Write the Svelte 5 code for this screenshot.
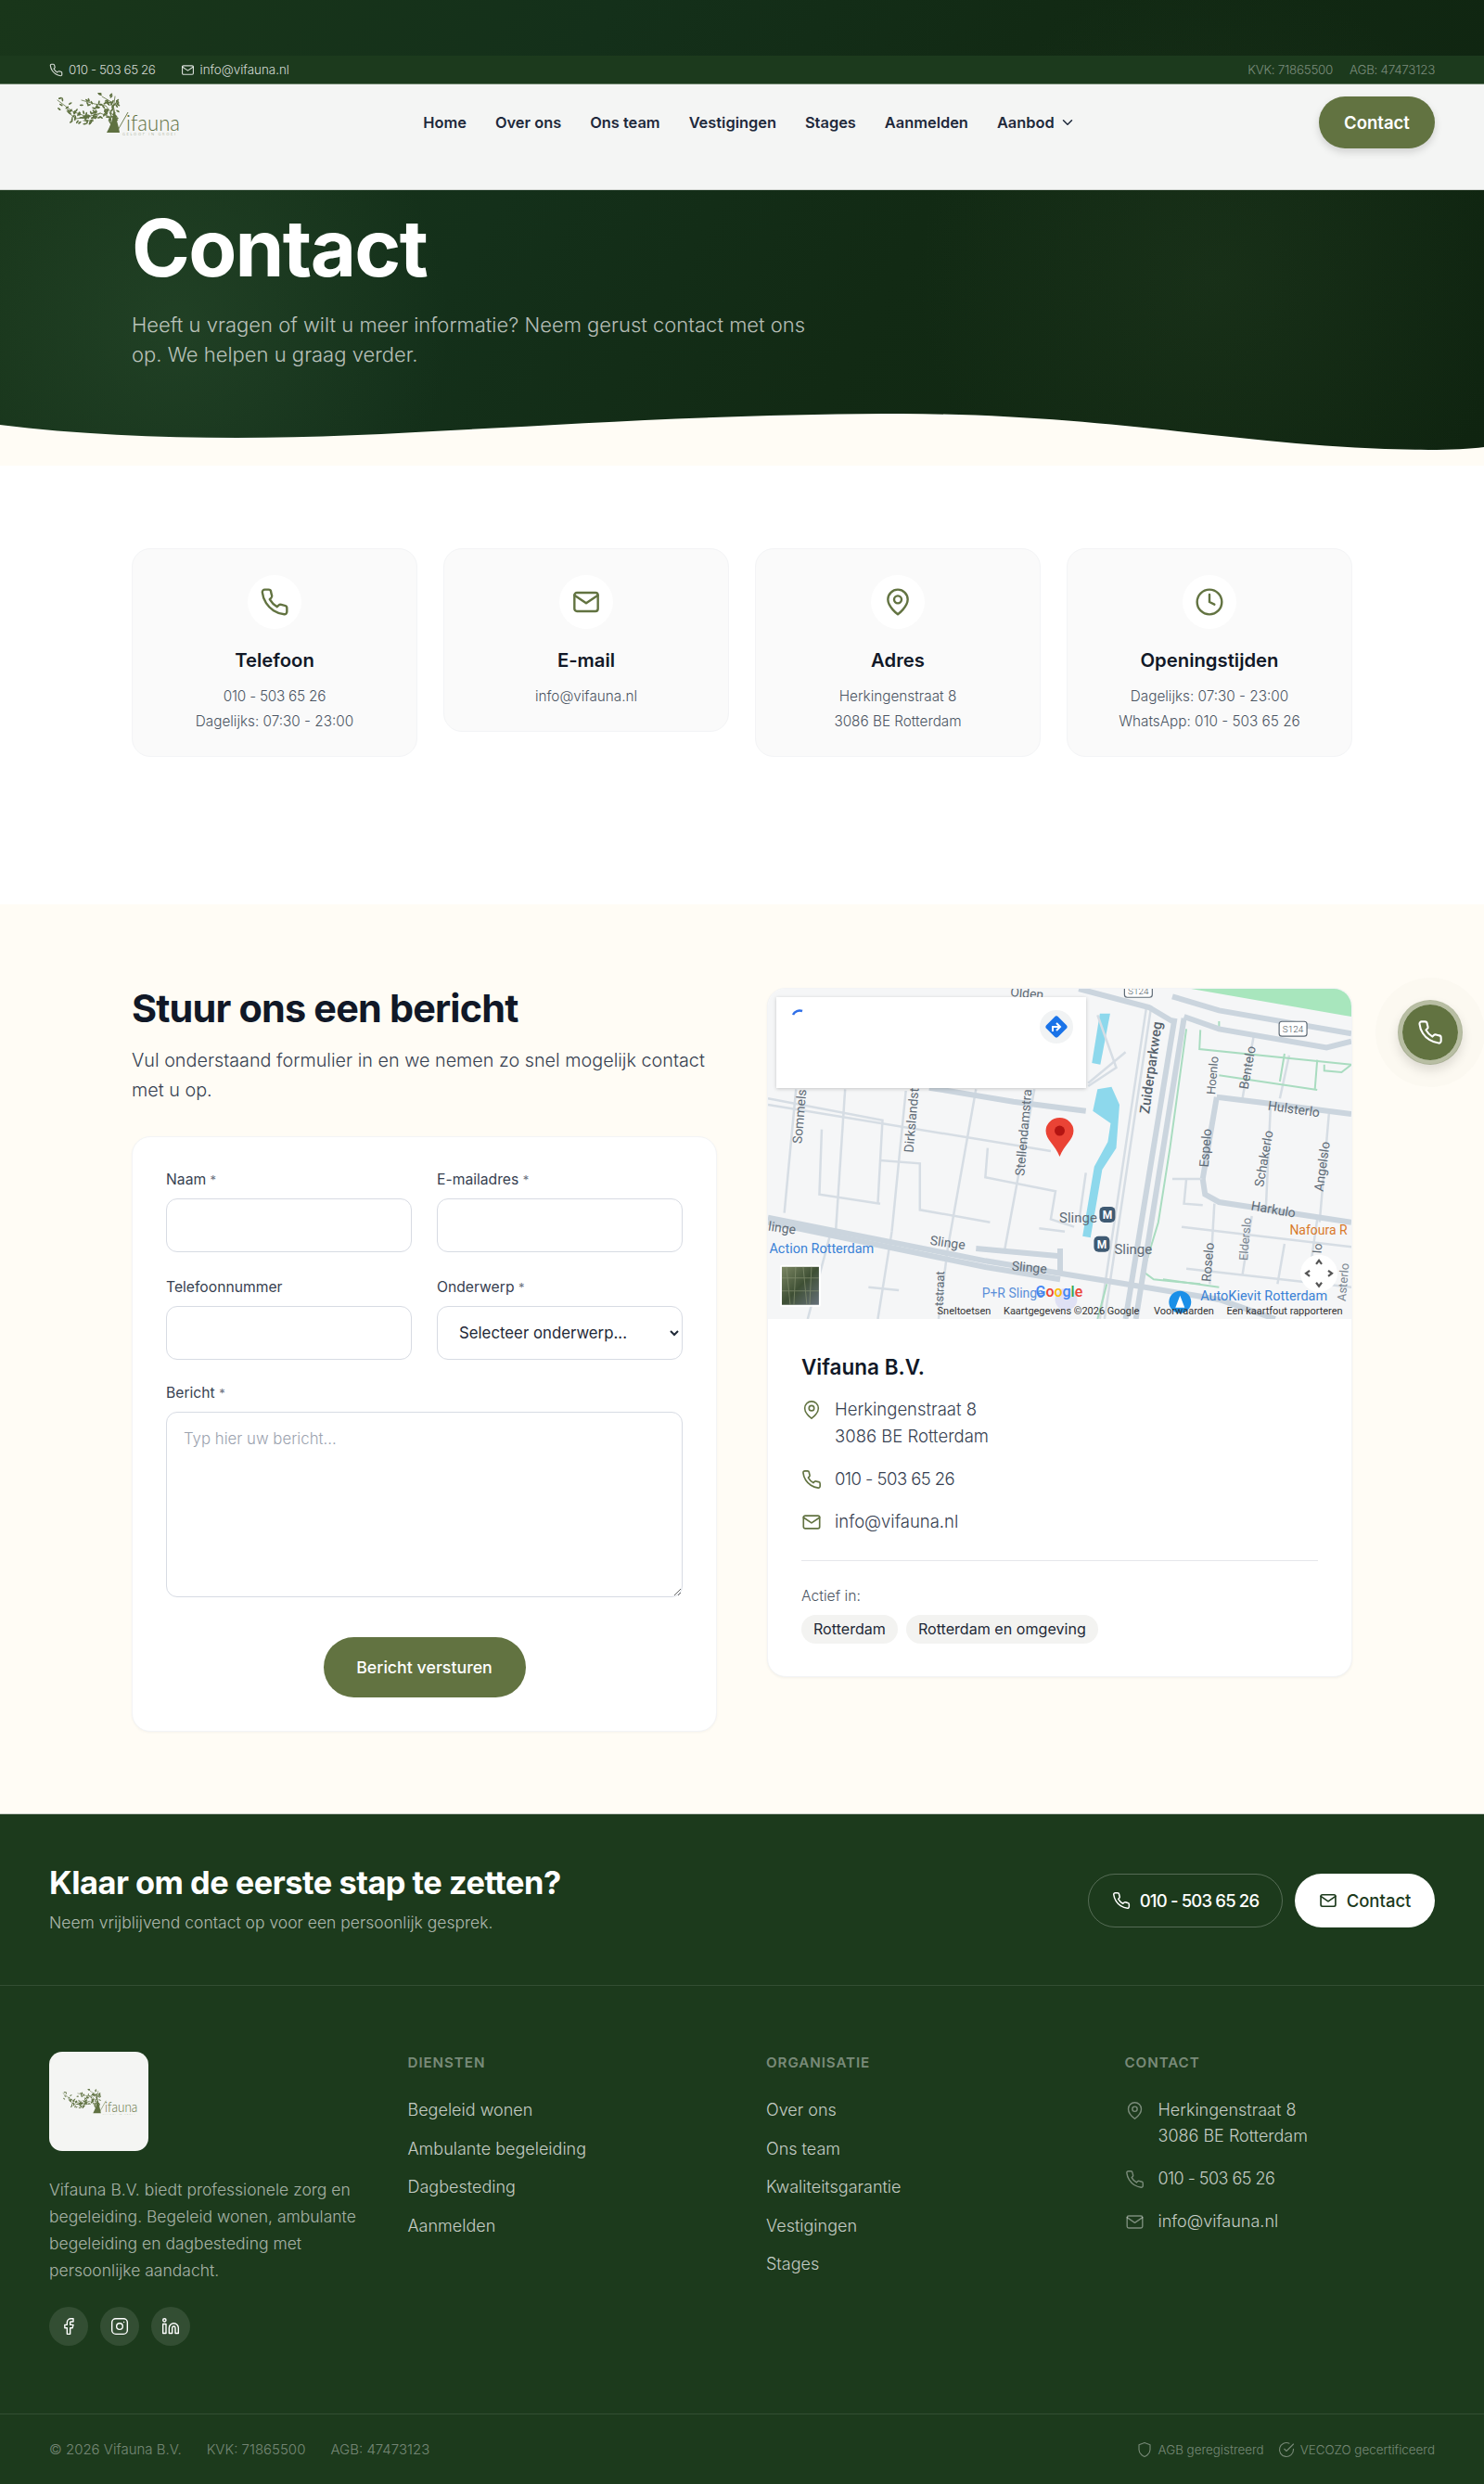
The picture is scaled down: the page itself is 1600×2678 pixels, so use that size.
<script>
  const nav = ['Home', 'Over ons', 'Ons team', 'Vestigingen', 'Stages', 'Aanmelden'];
  const diensten = ['Begeleid wonen', 'Ambulante begeleiding', 'Dagbesteding', 'Aanmelden'];
  const organisatie = ['Over ons', 'Ons team', 'Kwaliteitsgarantie', 'Vestigingen', 'Stages'];

  // Deterministic leaf cloud for the tree logo
  const branches = [
    [[66, 28], [50, 22], [36, 26], [20, 20], [4, 8]],
    [[64, 24], [56, 14], [44, 12], [30, 8]],
    [[66, 26], [62, 10], [52, 4]],
    [[50, 22], [40, 30], [32, 30]],
    [[36, 26], [24, 28], [14, 20]],
    [[64, 18], [66, 4]]
  ];
  let seed = 7;
  const rnd = () => ((seed = (seed * 16807) % 2147483647) / 2147483647);
  const leaves = [];
  for (const b of branches) {
    for (let i = 1; i < b.length; i++) {
      for (let k = 0; k < 8; k++) {
        const t = k / 8;
        leaves.push({
          x: b[i - 1][0] + (b[i][0] - b[i - 1][0]) * t + (rnd() - 0.5) * 10,
          y: b[i - 1][1] + (b[i][1] - b[i - 1][1]) * t + (rnd() - 0.5) * 10,
          r: Math.floor(rnd() * 180)
        });
      }
    }
  }

  // Map: geometry is given in a 1248x1068 grid and stretched onto the map
  const wide = [
    'M905 140 L800 1113', 'M925 140 L822 1113',
    'M700 45 L850 105 L900 150', 'M900 70 L1000 115 L1283 190', 'M925 135 L1000 175 L1230 235 L1283 215',
    'M35 785 L500 925 L660 965 L800 1000 L1000 1050 L1120 1113', 'M35 800 L500 945 L660 985',
    'M380 365 L560 410 L715 440',
    'M995 395 L1100 415 L1283 450', 'M965 660 L970 710 L1000 735 L1283 800', 'M995 395 L965 660',
    'M660 885 L660 960', 'M480 885 L660 910'
  ];
  const thin = [
    'M95 370 L70 770', 'M35 400 L280 470 L270 740', 'M35 420 L640 570', 'M200 370 L180 830',
    'M330 375 L300 830', 'M480 370 L420 880', 'M605 370 L540 900', 'M150 500 L145 710 L275 740',
    'M275 600 L360 610 L360 760 L510 800', 'M505 560 L500 655 L650 700 L640 790 L690 815',
    'M715 640 L700 800', 'M615 820 L670 830', 'M900 660 L960 660', 'M930 660 L925 740 L965 745',
    'M1110 430 L1100 760', 'M1235 450 L1215 800', 'M990 740 L980 1000', 'M920 815 L1283 880',
    'M1070 780 L1050 970', 'M930 950 L1283 1010', 'M1210 790 L1190 1000', 'M1140 870 L1125 1000',
    'M120 1113 L170 830', 'M270 1113 L300 830', 'M400 1113 L420 880', 'M250 1010 L315 1020',
    'M740 130 L780 300 L720 360', 'M800 250 L720 350', 'M1075 190 L1050 400', 'M1150 260 L1130 400',
    'M845 100 L745 1113', 'M855 100 L755 1113'
  ];
  const green = [
    'M930 175 L895 560 L870 800 L838 960 L860 985 L960 1000',
    'M960 178 L958 240 L1283 290', 'M1000 150 L1000 180', 'M1000 325 L1210 372',
    'M1225 290 L1225 310 L1262 315 L1283 290', 'M1140 255 L1130 345', 'M1210 275 L1205 370',
    'M880 985 L1000 1010', 'M760 1000 L740 1113'
  ];
  const labels = [
    ['Olden', 590, 62, 5, 14],
    ['Sommels', 105, 458, -85, 14],
    ['Dirkslandst', 345, 470, -85, 14],
    ['Stellendamstra', 585, 510, -85, 14],
    ['Zuiderparkweg', 858, 300, -82, 15, '#56616c', 500],
    ['Hoenlo', 990, 325, -85, 13],
    ['Bentelo', 1065, 300, -80, 14],
    ['Hulsterlo', 1162, 437, 8, 14],
    ['Espelo', 975, 560, -85, 14],
    ['Schakerlo', 1100, 595, -80, 14],
    ['Angelslo', 1225, 620, -82, 14],
    ['Harkulo', 1118, 762, 10, 14],
    ['Nafoura R', 1215, 828, 0, 14, '#d97a2b'],
    ['Elderslo', 1060, 855, -85, 13, '#7b8691'],
    ['Roselo', 980, 930, -85, 14],
    ['Asterlo', 1270, 995, -85, 13, '#7b8691'],
    ['lo', 1215, 885, -85, 13],
    ['Slinge', 700, 790, 0, 15],
    ['Slinge', 818, 892, 0, 15],
    ['Slinge', 420, 870, 8, 14],
    ['Slinge', 595, 950, 5, 14],
    ['linge', 65, 822, 8, 14],
    ['Action Rotterdam', 150, 888, 0, 14.5, '#3b82d6'],
    ['P+R Slinge', 560, 1035, 0, 14, '#5b8fd9'],
    ['tstraat', 405, 1015, -88, 13],
    ['AutoKievit Rotterdam', 1098, 1042, 0, 14.5, '#3b82d6']
  ];
  const mx = (x) => (x - 35) / 1.985;
  const my = (y) => (y - 45) / 3;
  const attribution = [
    ['Sneltoetsen', 398],
    ['Kaartgegevens ©2026 Google', 540],
    ['Voorwaarden', 862],
    ['Een kaartfout rapporteren', 1018]
  ];
</script>

{#snippet icon(name, size, sw = 2)}
  <svg class="icon" width={size} height={size} viewBox="0 0 24 24" fill="none" stroke="currentColor" stroke-width={sw} stroke-linecap="round" stroke-linejoin="round">
    {#if name === 'phone'}
      <path d="M22 16.92v3a2 2 0 0 1-2.18 2 19.79 19.79 0 0 1-8.63-3.07 19.5 19.5 0 0 1-6-6 19.79 19.79 0 0 1-3.07-8.67A2 2 0 0 1 4.11 2h3a2 2 0 0 1 2 1.72 12.84 12.84 0 0 0 .7 2.81 2 2 0 0 1-.45 2.11L8.09 9.91a16 16 0 0 0 6 6l1.27-1.27a2 2 0 0 1 2.11-.45 12.84 12.84 0 0 0 2.81.7A2 2 0 0 1 22 16.92z" />
    {:else if name === 'mail'}
      <rect x="2.5" y="4.5" width="19" height="15" rx="2" /><path d="M2.5 6.5 12 13l9.5-6.5" />
    {:else if name === 'pin'}
      <path d="M20 10c0 6-8 12-8 12s-8-6-8-12a8 8 0 0 1 16 0Z" /><circle cx="12" cy="10" r="3" />
    {:else if name === 'clock'}
      <circle cx="12" cy="12" r="10" /><path d="M12 6v6l4 2" />
    {:else if name === 'chevron'}
      <path d="m6 9 6 6 6-6" />
    {:else if name === 'shield'}
      <path d="M12 22s8-3 8-10V5l-8-3-8 3v7c0 7 8 10 8 10z" />
    {:else if name === 'check'}
      <path d="M22 11.08V12a10 10 0 1 1-5.93-9.14" /><path d="M22 4 12 14.01l-3-3" />
    {:else if name === 'facebook'}
      <path d="M18 2h-3a5 5 0 0 0-5 5v3H7v4h3v8h4v-8h3l1-4h-4V7a1 1 0 0 1 1-1h3z" />
    {:else if name === 'instagram'}
      <rect x="2" y="2" width="20" height="20" rx="5" /><circle cx="12" cy="12" r="4" /><path d="M17.5 6.5h.01" />
    {:else if name === 'linkedin'}
      <path d="M16 8a6 6 0 0 1 6 6v7h-4v-7a2 2 0 0 0-4 0v7h-4v-7a6 6 0 0 1 6-6z" /><rect x="2" y="9" width="4" height="12" /><circle cx="4" cy="4" r="2" />
    {/if}
  </svg>
{/snippet}

{#snippet logo(width, height)}
  <svg class="logo-svg" {width} {height} viewBox="0 0 136 46">
    <g fill="none" stroke="#5f7141" stroke-width="0.8" stroke-linecap="round">
      {#each branches as b}
        <polyline points={b.map((p) => p.join(',')).join(' ')} />
      {/each}
    </g>
    <g fill="#5f7141">
      {#each leaves as l}
        <ellipse cx={l.x} cy={l.y} rx="2.1" ry="0.9" transform="rotate({l.r} {l.x} {l.y})" />
      {/each}
      <path d="M65 16 C67 28 70 36 71 43 H57 C61 36 64 28 65 16 Z" />
    </g>
    <path d="M68 42 L80 21" stroke="#5f7141" stroke-width="0.9" fill="none" />
    <text class="logo-word" x="78" y="41" textLength="58" lengthAdjust="spacingAndGlyphs">ifauna</text>
    <text class="logo-tag" x="74" y="45.5" textLength="58">GELOOF IN GROEI</text>
  </svg>
{/snippet}

<div class="page">
  <div class="hero">
    <div class="topbar">
      <div class="tb-group">
        <span class="tb-item">{@render icon('phone', 15, 1.8)}<span class="num">010 - 503 65 26</span></span>
        <span class="tb-item">{@render icon('mail', 15, 1.8)}info@vifauna.nl</span>
      </div>
      <div class="tb-group tb-dim">
        <span>KVK: 71865500</span>
        <span>AGB: 47473123</span>
      </div>
    </div>
    <header class="nav">
      <a class="logo" href="#top">{@render logo(136, 46)}</a>
      <nav class="links">
        {#each nav as item}<a href="#top">{item}</a>{/each}
        <a href="#top" class="drop">Aanbod {@render icon('chevron', 18, 2)}</a>
      </nav>
      <a class="nav-cta" href="#top">Contact</a>
    </header>
    <div class="hero-body">
      <h1>Contact</h1>
      <p>Heeft u vragen of wilt u meer informatie? Neem gerust contact met ons op. We helpen u graag verder.</p>
    </div>
    <svg class="wave" viewBox="0 0 1600 56" preserveAspectRatio="none">
      <path d="M0 12 C80 22 170 26 255 26 C450 26 650 2 953 0 C1200 -1 1350 38 1540 39 C1565 39 1585 38 1600 36 V56 H0 Z" fill="#fffcf5" />
    </svg>
  </div>

  <section class="cards">
    <article class="card">
      <div class="bubble">{@render icon('phone', 32, 1.8)}</div>
      <h3>Telefoon</h3>
      <p class="num2">010 - 503 65 26</p>
      <p>Dagelijks: 07:30 - 23:00</p>
    </article>
    <article class="card">
      <div class="bubble">{@render icon('mail', 32, 1.8)}</div>
      <h3>E-mail</h3>
      <p>info@vifauna.nl</p>
    </article>
    <article class="card">
      <div class="bubble">{@render icon('pin', 32, 1.8)}</div>
      <h3>Adres</h3>
      <p>Herkingenstraat 8</p>
      <p>3086 BE Rotterdam</p>
    </article>
    <article class="card">
      <div class="bubble">{@render icon('clock', 32, 1.8)}</div>
      <h3>Openingstijden</h3>
      <p>Dagelijks: 07:30 - 23:00</p>
      <p>WhatsApp: 010 - 503 65 26</p>
    </article>
  </section>

  <section class="contact">
    <div class="col-left">
      <h2>Stuur ons een bericht</h2>
      <p class="lead">Vul onderstaand formulier in en we nemen zo snel mogelijk contact met u op.</p>
      <form class="form">
        <div class="grid2">
          <label>Naam <span class="req">*</span><input type="text" /></label>
          <label>E-mailadres <span class="req">*</span><input type="email" /></label>
          <label>Telefoonnummer<input type="tel" /></label>
          <label>Onderwerp <span class="req">*</span>
            <select><option>Selecteer onderwerp...</option></select>
          </label>
        </div>
        <label class="full">Bericht <span class="req">*</span><textarea placeholder="Typ hier uw bericht..."></textarea></label>
        <button type="button" class="send">Bericht versturen</button>
      </form>
    </div>

    <aside class="info-card">
      <div class="map">
        <svg class="map-lines" viewBox="35 45 1248 1068" preserveAspectRatio="none">
          <path d="M940 45 H1283 V135 L1262 130 Z" fill="#a8e6bd" />
          <path d="M745 125 L767 125 L746 290 L728 285 Z" fill="#8dd8ec" />
          <path d="M730 440 L740 370 L770 362 L787 420 L780 560 L750 630 L725 850 L708 845 L733 620 L762 540 L768 480 Z" fill="#8dd8ec" />
          {#each thin as d}<path {d} class="r-thin" />{/each}
          {#each green as d}<path {d} class="r-green" />{/each}
          {#each wide as d}<path {d} class="r-wide" />{/each}
        </svg>
        <svg class="map-top" viewBox="0 0 630 356">
          {#each labels as [t, x, y, rot, size, color, weight]}
            <text class="m-label" x={mx(x)} y={my(y)} text-anchor="middle" dominant-baseline="middle" font-size={size} fill={color || '#5f6b76'} font-weight={weight || 400} transform="rotate({rot} {mx(x)} {my(y)})">{t}</text>
          {/each}
          <g class="m-badge"><rect x="385" y="-6" width="30" height="15" rx="3" /><text x="400" y="6">S124</text></g>
          <g class="m-badge"><rect x="552" y="35" width="30" height="16" rx="3" /><text x="567" y="47">S124</text></g>
          <g class="m-metro"><rect x="358" y="235" width="17" height="17" rx="5" /><text x="366.5" y="248">M</text></g>
          <g class="m-metro"><rect x="352" y="267" width="17" height="17" rx="5" /><text x="360.5" y="280">M</text></g>
          <circle cx="322" cy="335" r="12" fill="#d9dcf3" opacity="0.8" />
          <path d="M315 181 C310 168 300 163 300 153 a15 14 0 0 1 30 0 C330 163 320 168 315 181 Z" fill="#ea4335" />
          <circle cx="315" cy="153" r="5.5" fill="#b31412" />
          <circle cx="445" cy="338" r="12" fill="#1a8fe8" /><path d="M445 331 l5 13 h-10 Z" fill="#fff" />
          <text class="m-google" x="289" y="332"><tspan fill="#4285f4">G</tspan><tspan fill="#ea4335">o</tspan><tspan fill="#fbbc05">o</tspan><tspan fill="#4285f4">g</tspan><tspan fill="#34a853">l</tspan><tspan fill="#ea4335">e</tspan></text>
          {#each attribution as [t, x]}
            <text class="m-attr" x={mx(x)} y="351">{t}</text>
          {/each}
          <defs>
            <linearGradient id="sat" x1="0" y1="0" x2="1" y2="1">
              <stop offset="0" stop-color="#7c8763" /><stop offset="0.5" stop-color="#3e4f34" /><stop offset="1" stop-color="#66707a" />
            </linearGradient>
          </defs>
          <rect x="13" y="298" width="44" height="45" fill="#fff" rx="2" />
          <rect x="15" y="300" width="40" height="41" fill="url(#sat)" />
          <path d="M20 300 L24 341 M30 300 L28 341 M38 300 L42 341 M47 300 L45 341 M15 312 H55 M15 326 H55" stroke="#8f9a78" stroke-width="1" opacity="0.6" />
          <circle cx="595" cy="307" r="20" fill="#fff" />
          <path d="M592 297 l3 -4 l3 4 M592 317 l3 4 l3 -4 M585 304 l-4 3 l4 3 M605 304 l4 3 l-4 3" stroke="#555" stroke-width="2.2" fill="none" />
        </svg>
        <div class="m-panel">
          <svg class="m-panel-svg" width="334" height="98" viewBox="0 0 334 98">
            <path d="M18 19 A8 8 0 0 1 28 15" stroke="#2f6fe8" stroke-width="2.5" fill="none" />
            <circle cx="302" cy="32" r="18" fill="#f1f3f4" />
            <rect x="293" y="23" width="18" height="18" rx="3" transform="rotate(45 302 32)" fill="#1a73e8" />
            <path d="M298 37 v-5 h7 M302 28 l4 4 -4 4" stroke="#fff" stroke-width="2" fill="none" />
          </svg>
        </div>
      </div>
      <div class="info">
        <h3>Vifauna B.V.</h3>
        <div class="i-row"><span class="i-ic">{@render icon('pin', 22, 1.8)}</span><div>Herkingenstraat 8<br />3086 BE Rotterdam</div></div>
        <div class="i-row"><span class="i-ic">{@render icon('phone', 22, 1.8)}</span><div class="num">010 - 503 65 26</div></div>
        <div class="i-row"><span class="i-ic">{@render icon('mail', 22, 1.8)}</span><div>info@vifauna.nl</div></div>
        <div class="active">
          <div class="active-l">Actief in:</div>
          <div class="chips"><span>Rotterdam</span><span>Rotterdam en omgeving</span></div>
        </div>
      </div>
    </aside>
  </section>

  <footer class="footer">
    <div class="cta">
      <div>
        <h2>Klaar om de eerste stap te zetten?</h2>
        <p>Neem vrijblijvend contact op voor een persoonlijk gesprek.</p>
      </div>
      <div class="cta-btns">
        <a href="#top" class="btn-o">{@render icon('phone', 20, 1.8)}<span class="num tight">010 - 503 65 26</span></a>
        <a href="#top" class="btn-w">{@render icon('mail', 20, 2)}Contact</a>
      </div>
    </div>
    <div class="f-main">
      <div class="f-brand">
        <div class="f-logo">{@render logo(84, 28)}</div>
        <p>Vifauna B.V. biedt professionele zorg en begeleiding. Begeleid wonen, ambulante begeleiding en dagbesteding met persoonlijke aandacht.</p>
        <div class="socials">
          <a href="#top" aria-label="Facebook">{@render icon('facebook', 20, 1.7)}</a>
          <a href="#top" aria-label="Instagram">{@render icon('instagram', 20, 1.7)}</a>
          <a href="#top" aria-label="LinkedIn">{@render icon('linkedin', 20, 1.7)}</a>
        </div>
      </div>
      <div>
        <h4>Diensten</h4>
        <ul>{#each diensten as d}<li>{d}</li>{/each}</ul>
      </div>
      <div>
        <h4>Organisatie</h4>
        <ul>{#each organisatie as d}<li>{d}</li>{/each}</ul>
      </div>
      <div>
        <h4>Contact</h4>
        <div class="f-contact">
          <div class="f-row"><span>{@render icon('pin', 21, 1.6)}</span><div>Herkingenstraat 8<br />3086 BE Rotterdam</div></div>
          <div class="f-row"><span>{@render icon('phone', 21, 1.6)}</span><div class="num">010 - 503 65 26</div></div>
          <div class="f-row"><span>{@render icon('mail', 21, 1.6)}</span><div>info@vifauna.nl</div></div>
        </div>
      </div>
    </div>
    <div class="f-bottom">
      <div class="f-legal"><span>© 2026 Vifauna B.V.</span><span>KVK: 71865500</span><span>AGB: 47473123</span></div>
      <div class="f-badges">
        <span>{@render icon('shield', 18, 1.5)}AGB geregistreerd</span>
        <span>{@render icon('check', 18, 1.5)}VECOZO gecertificeerd</span>
      </div>
    </div>
  </footer>

  <a class="fab" href="#top" aria-label="Bellen">{@render icon('phone', 28, 1.8)}</a>
</div>

<style>
  :global(body) { margin: 0; background: #fff; }
  .page {
    position: relative;
    width: 1600px;
    font-family: Inter, "Noto Sans", sans-serif;
    font-weight: 300;
    color: #1f2937;
  }
  h1, h2, h3, h4, p, ul { margin: 0; padding: 0; }
  a { color: inherit; text-decoration: none; }
  .icon { display: block; flex: none; }
  .num { letter-spacing: -0.03em; }
  .num.tight { letter-spacing: -0.045em; }
  .num2 { letter-spacing: -0.015em; }

  /* hero + header */
  .hero {
    padding-top: 60px;
    background:
      radial-gradient(circle 420px at 190px 350px, rgba(60, 100, 65, 0.28), transparent 70%),
      radial-gradient(circle 460px at 1310px 300px, rgba(70, 100, 60, 0.14), transparent 70%),
      linear-gradient(120deg, #19361a 0%, #14301a 35%, #122a14 60%, #0f2410 100%);
  }
  .topbar {
    height: 30px;
    padding: 0 53px;
    display: flex;
    align-items: center;
    justify-content: space-between;
    background: #1c3a1d;
    border-bottom: 1px solid #6b8068;
    font-size: 13.4px;
    color: rgba(255, 255, 255, 0.82);
  }
  .tb-group { display: flex; gap: 27px; }
  .tb-dim { gap: 18px; color: rgba(255, 255, 255, 0.42); letter-spacing: -0.02em; }
  .tb-item { display: flex; align-items: center; gap: 6px; }
  .nav {
    box-sizing: border-box;
    height: 114px;
    padding: 13px 53px 0;
    display: flex;
    justify-content: space-between;
    align-items: flex-start;
    background: #f4f5f4;
    border-bottom: 1px solid #cfd3cf;
  }
  .logo { width: 141px; margin-top: -4px; padding-left: 5px; box-sizing: border-box; display: block; }
  .logo-svg { display: block; }
  .logo-word { font-family: Lato, sans-serif; font-weight: 300; font-size: 24px; fill: #5f7141; }
  .logo-tag { font-family: Lato, sans-serif; font-size: 4px; fill: #7d8a66; letter-spacing: 1px; }
  .links {
    height: 56px;
    display: flex;
    align-items: center;
    gap: 31px;
    font-size: 16.4px;
    font-weight: 600;
    color: #1e293b;
  }
  .drop { display: flex; align-items: center; gap: 5px; }
  .nav-cta {
    width: 125px;
    height: 56px;
    border-radius: 28px;
    display: flex;
    align-items: center;
    justify-content: center;
    background: #627341;
    color: #fff;
    font-size: 18.5px;
    font-weight: 600;
    box-shadow: 0 4px 8px rgba(0, 0, 0, 0.15);
  }
  .hero-body { padding: 19px 142px 0; }
  h1 { font-size: 85px; line-height: 88px; font-weight: 700; color: #fff; letter-spacing: -0.02em; }
  .hero-body p {
    margin-top: 22px;
    max-width: 760px;
    font-size: 22px;
    line-height: 32px;
    color: rgba(255, 255, 255, 0.7);
  }
  .wave { display: block; width: 100%; height: 56px; margin-top: 48px; }

  /* cards */
  .cards {
    padding: 89px 142px 159px;
    display: grid;
    grid-template-columns: repeat(4, 1fr);
    gap: 28px;
    align-items: start;
  }
  .card {
    padding: 28px 20px 24px;
    border: 1px solid #f3f4f6;
    border-radius: 20px;
    background: #fafafa;
    text-align: center;
  }
  .bubble {
    width: 58px;
    height: 58px;
    margin: 0 auto 20px;
    border-radius: 50%;
    display: flex;
    align-items: center;
    justify-content: center;
    background: #fff;
    color: #627341;
  }
  .card h3 { font-size: 20.3px; line-height: 28px; font-weight: 600; color: #111827; margin-bottom: 11px; }
  .card p { font-size: 15.3px; line-height: 27px; color: #4b5563; }

  /* contact */
  .contact {
    padding: 90px 142px 88px;
    background: #fffcf5;
    display: grid;
    grid-template-columns: 631px 631px;
    gap: 54px;
    align-items: start;
  }
  .col-left h2 { font-size: 41.4px; line-height: 44px; font-weight: 700; color: #111827; letter-spacing: -0.02em; }
  .lead { margin-top: 18px; font-size: 19.8px; line-height: 32px; color: #374151; }
  .form {
    margin-top: 34px;
    padding: 35px 36px 36px;
    border: 1px solid #f3f4f6;
    border-radius: 20px;
    background: #fff;
    box-shadow: 0 1px 3px rgba(0, 0, 0, 0.04);
  }
  .grid2 { display: grid; grid-template-columns: 1fr 1fr; gap: 27px 27px; }
  label { display: block; font-size: 15.7px; line-height: 22px; font-weight: 400; color: #374151; }
  .req { font-size: 13px; color: #6b7280; }
  input, select, textarea {
    display: block;
    box-sizing: border-box;
    width: 100%;
    margin-top: 9px;
    border: 1.5px solid #d7dbe3;
    border-radius: 12px;
    background: #fff;
    font-family: inherit;
    font-size: 16.8px;
    font-weight: 300;
    color: #1f2937;
  }
  input, select { height: 58px; }
  select { padding: 0 0 0 19px; font-weight: 400; }
  textarea { height: 200px; padding: 18px 18px; resize: vertical; }
  textarea::placeholder { color: #9ca3af; }
  .full { margin-top: 25px; }
  .send {
    display: block;
    width: 218px;
    height: 65px;
    margin: 43px auto 0;
    border: 0;
    border-radius: 33px;
    background: #627341;
    color: #fff;
    font-family: inherit;
    font-size: 17.8px;
    font-weight: 500;
  }

  /* map + info */
  .info-card {
    border: 1px solid #f3f4f6;
    border-radius: 20px;
    overflow: hidden;
    background: #fff;
    box-shadow: 0 1px 3px rgba(0, 0, 0, 0.05);
  }
  .map { position: relative; height: 356px; background: #f5f6f7; overflow: hidden; }
  .map-lines, .map-top { position: absolute; inset: 0; width: 100%; height: 100%; }
  .r-wide, .r-thin, .r-green { fill: none; vector-effect: non-scaling-stroke; }
  .r-wide { stroke: #cbd5de; stroke-width: 6px; }
  .r-thin { stroke: #d6dde4; stroke-width: 2.5px; }
  .r-green { stroke: #a9dcc0; stroke-width: 2px; }
  .m-label { font-family: Roboto, sans-serif; }
  .m-badge rect { fill: #fff; stroke: #5f6b76; stroke-width: 1.2; }
  .m-badge text { font-family: Roboto, sans-serif; font-size: 10px; fill: #4a5560; text-anchor: middle; }
  .m-metro rect { fill: #3f5a73; }
  .m-metro text { font-family: Roboto, sans-serif; font-size: 12px; font-weight: 700; fill: #fff; text-anchor: middle; }
  .m-google { font-family: Roboto, sans-serif; font-size: 16px; font-weight: 500; }
  .m-attr { font-family: Roboto, sans-serif; font-size: 11px; fill: #333; font-weight: 400; }
  .m-panel {
    position: absolute;
    top: 9px;
    left: 9px;
    width: 334px;
    height: 98px;
    background: #fff;
    box-shadow: 0 1px 4px rgba(0, 0, 0, 0.2);
  }
  .m-panel-svg { display: block; }
  .info { padding: 36px 36px 35px; font-size: 18.5px; line-height: 29px; color: #374151; }
  .info h3 { font-size: 22.5px; line-height: 32px; font-weight: 600; color: #111827; margin-bottom: 15px; }
  .i-row { display: flex; gap: 14px; margin-bottom: 17px; }
  .i-ic { color: #627341; height: 29px; display: flex; align-items: center; width: 22px; }
  .active { margin-top: 27px; padding-top: 26px; border-top: 1px solid #e5e7eb; }
  .active-l { font-size: 15.7px; line-height: 24px; color: #4b5563; }
  .chips { display: flex; gap: 9px; margin-top: 8px; }
  .chips span {
    height: 31px;
    padding: 0 13px;
    display: flex;
    align-items: center;
    border-radius: 16px;
    background: #f3f3f1;
    font-size: 16.1px;
    font-weight: 400;
    color: #1f2937;
  }

  /* footer */
  .footer { background: #1c3a1c; border-top: 1px solid #c9cdc6; }
  .cta {
    height: 185px;
    box-sizing: border-box;
    padding: 0 53px 3px;
    display: flex;
    align-items: center;
    justify-content: space-between;
    border-bottom: 1px solid rgba(255, 255, 255, 0.1);
  }
  .cta h2 { font-size: 34.4px; line-height: 44px; font-weight: 700; color: #fff; letter-spacing: -0.015em; }
  .cta p { margin-top: 9px; font-size: 17.5px; line-height: 24px; color: rgba(255, 255, 255, 0.65); }
  .cta-btns { display: flex; gap: 13px; margin-top: 4px; }
  .btn-o, .btn-w {
    box-sizing: border-box;
    height: 58px;
    border-radius: 29px;
    display: flex;
    align-items: center;
    justify-content: center;
    gap: 10px;
    font-size: 18.5px;
    font-weight: 500;
  }
  .btn-o { width: 210px; border: 1px solid rgba(255, 255, 255, 0.25); color: #fff; }
  .btn-w { width: 151px; background: #fff; color: #1c3a1c; }
  .f-main {
    padding: 71px 53px 0;
    height: 462px;
    box-sizing: border-box;
    display: grid;
    grid-template-columns: repeat(4, 1fr);
    gap: 52px;
    border-bottom: 1px solid rgba(255, 255, 255, 0.1);
  }
  .f-logo {
    width: 107px;
    height: 107px;
    border-radius: 14px;
    background: #f4f5f3;
    display: flex;
    align-items: center;
    justify-content: center;
  }
  .f-brand p { margin-top: 27px; margin-right: -12px; font-size: 17.5px; line-height: 29px; color: rgba(255, 255, 255, 0.62); }
  .socials { display: flex; gap: 13px; margin-top: 25px; }
  .socials a {
    width: 42px;
    height: 42px;
    border-radius: 50%;
    display: flex;
    align-items: center;
    justify-content: center;
    background: rgba(255, 255, 255, 0.1);
    color: #fff;
  }
  h4 {
    font-size: 15.2px;
    line-height: 22px;
    font-weight: 600;
    letter-spacing: 0.06em;
    text-transform: uppercase;
    color: rgba(255, 255, 255, 0.42);
    margin: 1px 0 26px;
  }
  ul { list-style: none; font-size: 18px; line-height: 27px; color: rgba(255, 255, 255, 0.75); }
  li { margin-bottom: 14.5px; }
  .f-contact { font-size: 18px; line-height: 28px; color: rgba(255, 255, 255, 0.75); }
  .f-row { display: flex; gap: 15px; margin-bottom: 18px; }
  .f-row span { height: 28px; display: flex; align-items: center; color: rgba(255, 255, 255, 0.42); }
  .f-bottom {
    height: 75px;
    padding: 0 53px;
    display: flex;
    align-items: center;
    justify-content: space-between;
    font-size: 15px;
    color: rgba(255, 255, 255, 0.4);
  }
  .f-legal { display: flex; gap: 27px; }
  .f-badges { display: flex; gap: 15px; font-size: 13.4px; }
  .f-badges span { display: flex; align-items: center; gap: 6px; }

  .fab {
    position: absolute;
    top: 1078px;
    left: 1507px;
    box-sizing: border-box;
    width: 70px;
    height: 70px;
    border-radius: 50%;
    display: flex;
    align-items: center;
    justify-content: center;
    background: #627341;
    background-clip: padding-box;
    border: 5px solid rgba(98, 115, 65, 0.45);
    color: #fff;
    box-shadow: 0 0 0 24px rgba(98, 115, 65, 0.02), 0 6px 12px rgba(0, 0, 0, 0.12);
  }
</style>
